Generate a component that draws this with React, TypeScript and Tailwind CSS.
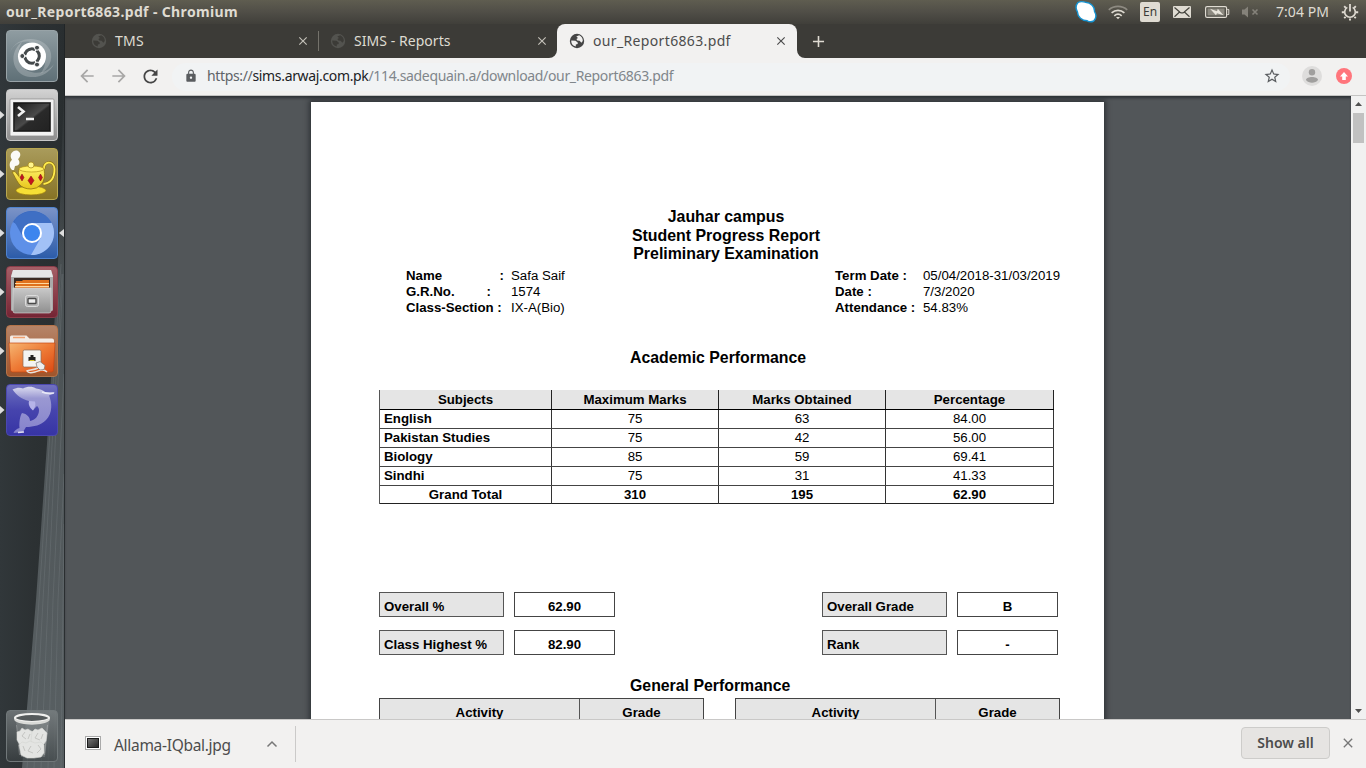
import React from "react";
import {
  MdRefresh,
  MdArrowBack,
  MdArrowForward,
  MdLock,
  MdStarBorder,
  MdClose,
  MdAdd,
} from "react-icons/md";

function TitleBar() {
  return (
    <header className="flex h-6 shrink-0 items-center bg-linear-to-b from-[#5f5d50] via-[#504e47] to-[#403f3a] pl-[6px] text-[#dfdbd2]">
      <span className="text-[14px] leading-6 font-bold tracking-[0.36px] whitespace-nowrap">
        our_Report6863.pdf - Chromium
      </span>
      <div className="ml-auto flex h-6 items-center">
        <svg width="24" height="24" viewBox="0 0 24 24" className="mr-[10px]">
          <path
            d="M4 2.500C7 .8 10 1.800 11.500 2.200c5.500.3 9.300 4.500 9 9.300 2 3.400 1.800 7-.8 9.500-2.500 1.200-5 .8-6.500-.2-5.200 0-9.500-3.700-9.800-9C1.500 8.500 1.800 5 4 2.500z"
            fill="#fff"
            stroke="#1592d0"
            strokeWidth="1.400"
          />
        </svg>
        <svg width="20" height="24" viewBox="0 0 20 24" className="mr-[12px]" fill="none" strokeWidth="1.700">
          <path d="M.8 9.800C6 5.100 14 5.100 19.200 9.800" stroke="#8e8b82" />
          <path d="M3.600 12.900c3.800-3.300 9-3.300 12.800 0" stroke="#dfdbd2" />
          <path d="M6.300 15.800c2.200-1.900 5.200-1.900 7.400 0" stroke="#dfdbd2" />
          <path d="M8 17h4l-2 2.300z" fill="#dfdbd2" stroke="none" />
        </svg>
        <span className="mr-[13px] flex h-5 w-5 items-center justify-center rounded-[2px] bg-[#dfdbd2] text-[12px] text-[#3c3b37]">
          En
        </span>
        <svg width="18" height="12" viewBox="0 0 18 12" className="mr-[14px]">
          <rect width="18" height="12" rx="1" fill="#dfdbd2" />
          <path
            d="M1.500 1.500L7 6.200c1.400 1 2.600 1 4 0l5.500-4.700M1.500 10.800L6.300 6.300M16.500 10.800l-4.800-4.500"
            stroke="#45443e"
            strokeWidth="1.200"
            fill="none"
          />
        </svg>
        <svg width="25" height="12" viewBox="0 0 25 12" className="mr-[11px]">
          <rect x=".6" y=".6" width="21" height="10.800" rx="1.500" fill="none" stroke="#dfdbd2" strokeWidth="1.200" />
          <rect x="2.500" y="2.500" width="17" height="7" fill="#8c8980" />
          <path d="M22.300 3.500h1.500v5h-1.500" fill="none" stroke="#dfdbd2" />
          <path d="M5 2.800l7 2.500.8-2.600 5.700 6.500-6.500-2-1 2z" fill="#e8e5dc" />
        </svg>
        <svg width="19" height="12" viewBox="0 0 19 12" className="mr-[16px]">
          <path d="M1 3.500h2.500L7 .5v11L3.500 8.500H1z" fill="#85827a" />
          <path d="M11.500 3.500l5 5m0-5l-5 5" stroke="#85827a" strokeWidth="1.600" />
        </svg>
        <span className="w-[53px] text-[14px] leading-6 tracking-[0.05px] whitespace-nowrap">7:04 PM</span>
        <svg width="18" height="18" viewBox="0 0 18 18" className="mr-[7px] ml-[12px]" fill="none" stroke="#dfdbd2">
          <path d="M6.300 4.400a5.300 5.300 0 1 0 5.400 0" strokeWidth="1.600" />
          <path d="M9 1v7.500" strokeWidth="1.800" />
          <path
            d="M3.200 3.200l1.600 1.600M14.800 3.200l-1.600 1.600M.8 9.300h2.200M17.200 9.300H15M3.200 15.200l1.400-1.400M14.800 15.200l-1.400-1.400M9 17.500v-2"
            strokeWidth="1.900"
          />
        </svg>
      </div>
    </header>
  );
}

function UbuntuIcon() {
  return (
    <svg width="52" height="52" viewBox="0 0 52 52">
      <path d="M4 22C10 6 36 4 44 20c4 10-2 20-10 24 8-8 8-26-6-31C18 9 8 13 4 22z" fill="#fff" opacity=".2" />
      <path d="M48 34C42 48 20 52 11 40 4 30 8 18 16 12c-6 10-5 24 6 29 10 4 20 1 26-7z" fill="#fff" opacity=".22" />
      <circle cx="26" cy="26.500" r="14" fill="#fff" />
      <circle cx="26" cy="26" r="7.200" fill="none" stroke="#44494b" strokeWidth="3.200" />
      <path d="M26 26L15 26M26 26l6-9.500M26 26l6 9.500" stroke="#fff" strokeWidth="1.300" />
      <circle cx="26" cy="26" r="5.500" fill="#fff" />
      <g fill="#44494b" stroke="#fff" strokeWidth="1">
        <circle cx="16.300" cy="26" r="2.500" />
        <circle cx="31" cy="17.700" r="2.500" />
        <circle cx="31" cy="34.600" r="2.500" />
      </g>
    </svg>
  );
}

function TerminalIcon() {
  return (
    <svg width="52" height="52" viewBox="0 0 52 52">
      <defs>
        <linearGradient id="term" x1="0" y1="0" x2="1" y2="1">
          <stop offset="0" stopColor="#191919" />
          <stop offset=".5" stopColor="#4a4a4a" />
          <stop offset=".55" stopColor="#2a2a2a" />
          <stop offset="1" stopColor="#222" />
        </linearGradient>
      </defs>
      <rect x="4" y="10" width="44" height="37" rx="1" fill="#f2f2f2" stroke="#8f8f8f" strokeWidth=".8" />
      <rect x="7" y="13" width="38" height="30" fill="#777" />
      <rect x="8" y="14" width="36" height="28" fill="url(#term)" stroke="#111" />
      <path d="M12 18l5.500 4.500L12 27" fill="none" stroke="#f2f2f2" strokeWidth="2.600" />
      <path d="M20 30h8" stroke="#f2f2f2" strokeWidth="2.400" />
    </svg>
  );
}

function TeapotIcon() {
  return (
    <svg width="52" height="52" viewBox="0 0 52 52">
      <defs>
        <linearGradient id="pot" x1="0" y1="0" x2="0" y2="1">
          <stop offset="0" stopColor="#fff26a" />
          <stop offset="1" stopColor="#e8c61c" />
        </linearGradient>
      </defs>
      <path d="M6 22c-4-4-2-9 0-10-4-6 2-11 6-9 4 2 2 7 0 8 3 4 1 7-3 7l-1 4z" fill="#fff" opacity=".95" />
      <ellipse cx="25" cy="42.500" rx="15" ry="4.500" fill="#f6df35" stroke="#9c7e11" strokeWidth=".8" />
      <path d="M38 21c-1-8 10-9 10.500 0 0 8-3 14-11 15" fill="none" stroke="#8f7412" strokeWidth="3" />
      <path d="M38 21c-1-8 10-9 10.500 0 0 8-3 14-11 15" fill="none" stroke="#ffec4d" strokeWidth="1.800" />
      <path
        d="M6 24l3-.5 4 5q-1-4 0-8 12-4 25 0 2 11-3 16-4 4.500-10 4.500-8 0-12-5c-3-4-5-9-7-12z"
        fill="url(#pot)"
        stroke="#8f7412"
        strokeWidth=".8"
      />
      <ellipse cx="25.500" cy="21" rx="12.500" ry="3" fill="#ffef62" stroke="#b6951a" strokeWidth=".7" />
      <circle cx="25" cy="17" r="3" fill="#fff58c" stroke="#a38313" strokeWidth=".7" />
      <path
        d="M16 26l2 3.500-2 3.500-2-3.500zM25 28l3 4.500-3 4.500-3-4.500zM34.500 26l2 3.500-2 3.500-2-3.500z"
        fill="#c5141d"
        stroke="#7a1015"
        strokeWidth=".5"
      />
    </svg>
  );
}

function ChromiumIcon() {
  return (
    <svg width="52" height="52" viewBox="0 0 52 52">
      <circle cx="26" cy="26" r="22" fill="#5e90e8" />
      <path d="M26 26L7 15A22 22 0 0 1 45 15z" fill="#3a66b8" />
      <path d="M26 16h19.600A22 22 0 0 1 25 48l9.700-17z" fill="#a2c1f6" />
      <path d="M8 14l9 16a10 10 0 0 1 9-14h19.600A22 22 0 0 0 8 14z" fill="#3f6fc4" />
      <circle cx="26" cy="26" r="10" fill="#fff" />
      <circle cx="26" cy="26" r="8" fill="#3d85ee" />
    </svg>
  );
}

function FilesIcon() {
  return (
    <svg width="52" height="52" viewBox="0 0 52 52">
      <defs>
        <linearGradient id="cab" x1="0" y1="0" x2="0" y2="1">
          <stop offset="0" stopColor="#c9c9c9" />
          <stop offset="1" stopColor="#8f8f8f" />
        </linearGradient>
      </defs>
      <path d="M7 4h38l2 6v34q0 1-2 1H7q-2 0-2-1V10z" fill="#aaa" />
      <path d="M7 4h38l2 7H5z" fill="#e6e6e6" />
      <rect x="8" y="12" width="36" height="12" fill="#3a2a22" />
      <path d="M10 15h6l1-1h26v9H9z" fill="#df711d" />
      <path d="M9 17.500h34M9 20.500h34" stroke="#ffd9a0" strokeWidth="1" />
      <path d="M7 22h38v23q0 2-2 2H9q-2 0-2-2z" fill="url(#cab)" stroke="#ddd" strokeWidth=".6" />
      <rect x="19.500" y="29.500" width="13" height="11" rx="2" fill="#b5b5b5" stroke="#dcdcdc" />
      <rect x="22" y="32.500" width="8" height="5" rx=".8" fill="#eee" stroke="#4a4a4a" strokeWidth="1.400" />
    </svg>
  );
}

function NetworkFolderIcon() {
  return (
    <svg width="52" height="52" viewBox="0 0 52 52">
      <defs>
        <linearGradient id="fold" x1="0" y1="0" x2="1" y2="1">
          <stop offset="0" stopColor="#f5b673" />
          <stop offset=".5" stopColor="#ee7a35" />
          <stop offset="1" stopColor="#dc4913" />
        </linearGradient>
      </defs>
      <path d="M4 20v-8q0-1.500 1.500-1.500h15l3 3H46q2 0 2 2v6z" fill="#f3ece6" />
      <path d="M7 12.500h12" stroke="#f0a070" strokeWidth="1.600" />
      <path d="M3 18h46l-1.500 27q0 2-2 2h-39q-2 0-2-2z" fill="url(#fold)" stroke="#c74712" strokeWidth=".7" />
      <rect x="17" y="25" width="18" height="17" rx="1.500" fill="#f4f4f2" stroke="#8c6a55" strokeWidth=".7" />
      <path d="M22.500 36v-4h2v-2h3v2h2v4z" fill="#222" />
      <path d="M23.500 35.500h5" stroke="#d5c22b" />
      <path d="M41 47c-4-4-8-1-12 0-3 .8-7 1-8-1 2-1 7-1 11-3" fill="none" stroke="#e7e2dc" strokeWidth="1.500" />
      <path d="M30 38l4-1.500 5 4-1 4-4 .5-3-3z" fill="#eee" stroke="#777" strokeWidth=".7" />
    </svg>
  );
}

function DolphinIcon() {
  return (
    <svg width="52" height="52" viewBox="0 0 52 52">
      <defs>
        <linearGradient id="dol" x1="0" y1="0" x2="0" y2="1">
          <stop offset="0" stopColor="#dcdcf0" />
          <stop offset=".25" stopColor="#9a98d2" />
          <stop offset="1" stopColor="#8583cc" />
        </linearGradient>
      </defs>
      <path
        d="M6.500 5.500C11 3.500 14 3.500 17 4.500 21 2 27 2 30 4.500 34 5 37 6 39 8l10 .5-6 3C46 18 47 29 40 36c-5 5-12 7-20 7l-3 5-9.500 1c1-2.500 3-4 6-5C13 38 14 32 16 29c5 1 8 4 8 8 5-1 9-5 9-11 0-2-1-3-2-4l-4 4c-2-2-4-5-4-9C16 15 11 12 6.500 5.500z"
        fill="url(#dol)"
      />
      <path d="M23 17c-1 4 1 7 4 9.500 2-3 3-6 2-9z" fill="#b5b3e8" />
      <path d="M36 8c4 1.500 8 2 12 1" stroke="#f3f3fb" strokeWidth="1.500" fill="none" opacity=".8" />
      <path d="M12 48.500l6-.5" stroke="#fff" strokeWidth="1.500" opacity=".8" />
    </svg>
  );
}

function TrashIcon() {
  return (
    <svg width="52" height="52" viewBox="0 0 52 52">
      <path d="M10 12h33l-4 35H15z" fill="#b9bcbc" opacity=".25" />
      <g fill="#e3e4e2" stroke="#d4d5d2" strokeWidth=".6">
        <path d="M11 22l3-1 2-3 3 2 3-1 3 2 4 1-1 10-7 4-7-1-3-5z" />
        <path d="M26 22l3-3 3 1 4-2 2 2 3 3-1 8-4 6-7 0-4-6z" />
        <path d="M13 35l3-3 4 1 4-2 5 2 6-1 3 3 0 8-3 4-7 1-7 0-6-3z" />
        <path
          d="M19 22l-3 4 4 3M24 24l-2 5M32 23l-3 5 5 2M37 24l-2 5M25 36l-3 5 5 2M32 35l3 4-4 4M17 36l2 5"
          fill="none"
          stroke="#c4c5c2"
          strokeWidth="1"
        />
      </g>
      <ellipse cx="26" cy="8" rx="17" ry="4" fill="#555a5b" stroke="#f0f0ee" strokeWidth="2.200" />
      <path d="M8.500 8.500v2c5 5.500 30 5.500 35 0v-2c-5 4.500-30 4.500-35 0z" fill="#d9dad7" />
      <path d="M10.500 15l3 30M41.500 15l-3 30" stroke="#e8e8e8" strokeWidth=".7" opacity=".4" />
    </svg>
  );
}

type Tile = { name: string; bg: string; icon: React.ReactNode; left: boolean; right?: boolean };

const tiles: Tile[] = [
  { name: "dash", bg: "from-[#8f9ca1] to-[#5f7077] border-[#98a3a7]", icon: <UbuntuIcon />, left: false },
  { name: "terminal", bg: "from-[#d2d2d2] to-[#8e8e8e] border-[#c8c8c8]", icon: <TerminalIcon />, left: true },
  { name: "teapot", bg: "from-[#a99b5b] to-[#877324] border-[#b8a750]", icon: <TeapotIcon />, left: true },
  { name: "browser", bg: "from-[#7b93c7] to-[#2c5ca9] border-[#4f83cf]", icon: <ChromiumIcon />, left: true, right: true },
  { name: "files", bg: "from-[#a65f67] to-[#742434] border-[#8b3d49]", icon: <FilesIcon />, left: true },
  { name: "remote", bg: "from-[#b58468] to-[#a0552b] border-[#b57449]", icon: <NetworkFolderIcon />, left: true },
  { name: "dolphin", bg: "from-[#7070bf] via-[#4644ad] to-[#3734a5] border-[#4b48b0]", icon: <DolphinIcon />, left: true },
];

function Launcher() {
  return (
    <aside className="relative flex w-[65px] shrink-0 flex-col bg-linear-to-r from-[#31373a] via-[#2c3133] to-[#292e30] pt-[6px]">
      <svg className="absolute inset-0" width="65" height="744" viewBox="0 0 65 744">
        <defs>
          <linearGradient id="wall" x1="0" y1="0" x2="0" y2="1">
            <stop offset="0" stopColor="#596063" stopOpacity="0" />
            <stop offset=".3" stopColor="#596063" stopOpacity=".7" />
            <stop offset="1" stopColor="#596063" />
          </linearGradient>
        </defs>
        <path d="M64 60L58 240L47 420L36 576L22 744H65V60z" fill="url(#wall)" />
        <g stroke="#82898b" strokeWidth=".7" opacity=".4" fill="none">
          <path d="M61 240L39 576L27 744M62 250L43 576L34 744M63 250L48 576L41 744M64 350L53 576L48 744M64 450L58 576L54 744M64 500L61 744" />
        </g>
        <path d="M64.500 0v744" stroke="#202426" opacity=".8" />
      </svg>
      <div className="relative flex flex-col gap-[7px]">
        {tiles.map((t) => (
          <div key={t.name} className="flex h-[52px] items-center">
            <svg width="6" height="10" viewBox="0 0 6 10">
              {t.left && <path d="M0 1l4.500 4L0 9z" fill="#dedede" />}
            </svg>
            <div className={"h-[52px] w-[52px] overflow-hidden rounded-[4px] border bg-linear-to-b " + t.bg}>
              <div className="-m-px">{t.icon}</div>
            </div>
            <svg width="7" height="10" viewBox="0 0 7 10">
              {t.right && <path d="M6 1L1 5l5 4z" fill="#dedede" />}
            </svg>
          </div>
        ))}
      </div>
      <div className="relative mt-auto mb-[6px] ml-[6px] h-[52px] w-[52px] overflow-hidden rounded-[4px] border border-[#71787a] bg-linear-to-b from-[#7a8082]/80 to-[#3d4345]/60">
        <div className="-m-px">
          <TrashIcon />
        </div>
      </div>
    </aside>
  );
}

function Globe({ color, land }: { color: string; land: string }) {
  return (
    <svg width="16" height="16" viewBox="0 0 16 16">
      <circle cx="8" cy="8" r="7.200" fill={color} />
      <path d="M2.300 7.600l4.200.1 2.200 1.700v1.500l-1.900.7v1.800C3.800 13 2 10.600 2.300 7.600z" fill={land} />
      <path d="M7.300 3.500l2.900-1.300c2.300.9 3.700 3 3.600 5.800l-1.400 1.700-1.800-1.900-2.300-.4-.9-1.500 1.600-.8z" fill={land} />
    </svg>
  );
}

function TabStrip() {
  return (
    <div className="flex h-[34px] shrink-0 items-center bg-[#3c3b37] text-[14px] text-[#dfdbd2]">
      <div className="flex h-full w-[253px] items-center pl-[26px]">
        <Globe color="#53534f" land="#3c3b37" />
        <span className="mb-[2px] ml-[8px] tracking-[0.2px]">TMS</span>
        <MdClose size={14} className="mr-[8px] ml-auto" color="#c4c1b9" />
      </div>
      <div className="h-5 w-px bg-[#74726b]" />
      <div className="flex h-full w-[238px] items-center pl-[11px]">
        <Globe color="#53534f" land="#3c3b37" />
        <span className="mb-[2px] ml-[8px] tracking-[0.05px] whitespace-nowrap">SIMS - Reports</span>
        <MdClose size={14} className="mr-[8px] ml-auto" color="#c4c1b9" />
      </div>
      <div className="relative flex h-full w-[240px] items-center rounded-t-[8px] bg-[#f2f1f0] pl-[12px] text-[#4c4c4c]">
        <svg className="absolute bottom-0 -left-[8px]" width="8" height="8" viewBox="0 0 8 8">
          <path d="M8 0v8H0a8 8 0 0 0 8-8z" fill="#f2f1f0" />
        </svg>
        <svg className="absolute -right-[8px] bottom-0" width="8" height="8" viewBox="0 0 8 8">
          <path d="M0 0v8h8a8 8 0 0 1-8-8z" fill="#f2f1f0" />
        </svg>
        <Globe color="#454545" land="#f2f1f0" />
        <span className="mb-[2px] ml-[8px] tracking-[0.35px] whitespace-nowrap">our_Report6863.pdf</span>
        <MdClose size={14} className="mr-[9px] ml-auto" color="#4c4c4c" />
      </div>
      <MdAdd size={19} className="ml-[12px]" color="#dfdbd2" />
    </div>
  );
}

function Toolbar() {
  return (
    <div className="flex h-[38px] shrink-0 items-center border-b border-[#c4c4c3] bg-[#f2f1f0] pl-[12px]">
      <MdArrowBack size={20} className="mb-px" color="#a8a7a6" />
      <MdArrowForward size={20} className="mb-px ml-[12px]" color="#a8a7a6" />
      <MdRefresh size={21} className="mb-px ml-[11px]" color="#454545" />
      <div className="ml-[11px] flex h-7 w-[1118px] items-center rounded-full bg-[#f1f3f4] pl-[12px]">
        <MdLock size={14} className="mb-[2px]" color="#5a5d60" />
        <span className="mb-[3px] ml-[9px] text-[14px] tracking-[-0.345px] whitespace-nowrap text-[#80868b]">
          <span className="text-[#5f6368]">https://</span>
          <span className="text-[#202124]">sims.arwaj.com.pk</span>
          /114.sadequain.a/download/our_Report6863.pdf
        </span>
        <MdStarBorder size={18} className="mr-[9px] mb-[2px] ml-auto" color="#5a5d60" />
      </div>
      <svg width="20" height="20" viewBox="0 0 20 20" className="mb-px ml-[12px]">
        <circle cx="10" cy="10" r="10" fill="#dedddc" />
        <circle cx="10" cy="6.200" r="3.200" fill="#a09f9e" />
        <path d="M4 14c0-4 12-4 12 0-2.500 3.500-9.500 3.500-12 0z" fill="#a09f9e" />
      </svg>
      <svg width="16" height="16" viewBox="0 0 16 16" className="mb-px ml-[14px]">
        <circle cx="8" cy="8" r="8" fill="#ff757c" />
        <path d="M8 4l4 4.500H9.800V12H6.200V8.500H4z" fill="#fff" />
      </svg>
    </div>
  );
}

const rows = [
  ["English", "75", "63", "84.00"],
  ["Pakistan Studies", "75", "42", "56.00"],
  ["Biology", "85", "59", "69.41"],
  ["Sindhi", "75", "31", "41.33"],
];

function Marks() {
  return (
    <div className="ml-[68px] w-[675px] border-l border-[#555] text-center">
      <div className="grid h-5 grid-cols-[172px_167px_167px_168px] border-b border-black bg-[#e5e5e5] leading-[19px] font-bold">
        {["Subjects", "Maximum Marks", "Marks Obtained", "Percentage"].map((h) => (
          <div key={h} className="border-r border-[#222]">
            {h}
          </div>
        ))}
      </div>
      {rows.map((r) => (
        <div key={r[0]} className="grid h-[19px] grid-cols-[172px_167px_167px_168px] border-b border-[#444] leading-[18px]">
          <div className="border-r border-[#333] pl-[4px] text-left font-bold">{r[0]}</div>
          <div className="border-r border-[#333]">{r[1]}</div>
          <div className="border-r border-[#333]">{r[2]}</div>
          <div className="border-r border-[#333]">{r[3]}</div>
        </div>
      ))}
      <div className="grid h-[18px] grid-cols-[172px_167px_167px_168px] border-b border-[#222] leading-[18px] font-bold">
        {["Grand Total", "310", "195", "62.90"].map((c) => (
          <div key={c} className="border-r border-[#333]">
            {c}
          </div>
        ))}
      </div>
    </div>
  );
}

function Pair({ label, value }: { label: string; value: string }) {
  return (
    <div className="flex h-[25px] gap-[10px] leading-[27px] font-bold">
      <div className="w-[125px] border border-[#555] bg-[#e5e5e5] pl-[4px]">{label}</div>
      <div className="w-[101px] border border-[#444] text-center">{value}</div>
    </div>
  );
}

function ActivityHead() {
  return (
    <div className="grid h-[40px] w-[325px] grid-cols-[200px_123px] border border-[#444] bg-[#e5e5e5] text-center leading-[27px] font-bold">
      <div className="border-r border-[#555]">Activity</div>
      <div>Grade</div>
    </div>
  );
}

function Report() {
  return (
    <div className="ml-[246px] h-[1000px] w-[793px] bg-white pt-[106px] font-['Liberation_Sans',Arial,sans-serif] text-[13.25px] text-black shadow-[0_0_5px_2px_rgba(20,24,28,0.55)]">
      <div className="ml-[37px] flex h-[56px] flex-col items-center text-[15.9px] leading-[18.5px] font-bold">
        <div>Jauhar campus</div>
        <div>Student Progress Report</div>
        <div>Preliminary Examination</div>
      </div>
      <div className="mt-[4px] flex h-[48px] pl-[95px] leading-[16px]">
        <div className="w-[105px] font-bold">
          <div className="flex justify-between pr-[7px]">
            <span>Name</span>
            <span>:</span>
          </div>
          <div className="flex justify-between pr-[20px]">
            <span>G.R.No.</span>
            <span>:</span>
          </div>
          <div className="whitespace-nowrap">Class-Section :</div>
        </div>
        <div className="w-[324px]">
          <div>Safa Saif</div>
          <div>1574</div>
          <div>IX-A(Bio)</div>
        </div>
        <div className="w-[88px] font-bold whitespace-nowrap">
          <div>Term Date :</div>
          <div>Date :</div>
          <div>Attendance :</div>
        </div>
        <div>
          <div>05/04/2018-31/03/2019</div>
          <div>7/3/2020</div>
          <div>54.83%</div>
        </div>
      </div>
      <div className="mt-[32px] mb-[22px] ml-[319px] h-[20px] text-[15.85px] leading-[20px] font-bold">
        Academic Performance
      </div>
      <Marks />
      <div className="mt-[88px] flex gap-[207px] pl-[68px]">
        <div className="flex flex-col gap-[13px]">
          <Pair label="Overall %" value="62.90" />
          <Pair label="Class Highest %" value="82.90" />
        </div>
        <div className="flex flex-col gap-[13px]">
          <Pair label="Overall Grade" value="B" />
          <Pair label="Rank" value="-" />
        </div>
      </div>
      <div className="mt-[21px] mb-[2px] ml-[319px] h-[20px] text-[15.85px] leading-[20px] font-bold">
        General Performance
      </div>
      <div className="flex gap-[31px] pl-[68px]">
        <ActivityHead />
        <ActivityHead />
      </div>
    </div>
  );
}

function Viewer() {
  return (
    <div className="flex min-h-0 flex-1">
      <main className="min-w-0 flex-1 overflow-hidden bg-[#525659] pt-[6px] shadow-[inset_0_3px_3px_-1px_rgba(20,24,28,0.6)]">
        <Report />
      </main>
      <div className="flex w-[15px] flex-col items-center bg-[#f1f1f1]">
        <svg width="15" height="17" viewBox="0 0 15 17">
          <path d="M4 10l3.500-4L11 10z" fill="#505050" />
        </svg>
        <div className="h-[30px] w-[11px] bg-[#c1c1c1]" />
        <svg width="15" height="17" viewBox="0 0 15 17" className="mt-auto">
          <path d="M4 7l3.500 4L11 7z" fill="#505050" />
        </svg>
      </div>
    </div>
  );
}

function DownloadBar() {
  return (
    <footer className="flex h-[49px] shrink-0 items-center border-t border-[#c9c8c7] bg-[#f2f1f0] text-[#4c4c4c]">
      <div className="flex h-9 w-[231px] items-center border-r border-[#cbcac9] pl-[20px]">
        <svg width="16" height="14" viewBox="0 0 16 14" className="mb-[2px]">
          <defs>
            <linearGradient id="thumb" x1="0" y1="0" x2="1" y2="1">
              <stop offset="0" stopColor="#777" />
              <stop offset="1" stopColor="#222" />
            </linearGradient>
          </defs>
          <rect x=".5" y=".5" width="15" height="13" fill="#fff" stroke="#aaa" />
          <rect x="2.500" y="2.500" width="11" height="9" fill="url(#thumb)" stroke="#1a1a1a" />
        </svg>
        <span className="mt-[3px] ml-[13px] text-[15.5px] tracking-[-0.3px] whitespace-nowrap">Allama-IQbal.jpg</span>
        <svg width="12" height="8" viewBox="0 0 12 8" className="mr-[17px] ml-auto">
          <path d="M1.500 6.500L6 2l4.500 4.500" fill="none" stroke="#777" strokeWidth="1.500" />
        </svg>
      </div>
      <button className="mb-[3px] ml-auto h-8 w-[89px] rounded-[4px] border border-[#cdccca] bg-[#e6e4e2] text-[14px] font-semibold">
        Show all
      </button>
      <MdClose size={16} className="mr-[10px] mb-[2px] ml-[10px]" color="#777" />
    </footer>
  );
}

export default function App() {
  return (
    <div className="flex h-[768px] w-[1366px] flex-col overflow-hidden font-['Noto_Sans','Open_Sans',sans-serif]">
      <TitleBar />
      <div className="flex min-h-0 flex-1">
        <Launcher />
        <div className="flex min-w-0 flex-1 flex-col">
          <TabStrip />
          <Toolbar />
          <Viewer />
          <DownloadBar />
        </div>
      </div>
    </div>
  );
}
